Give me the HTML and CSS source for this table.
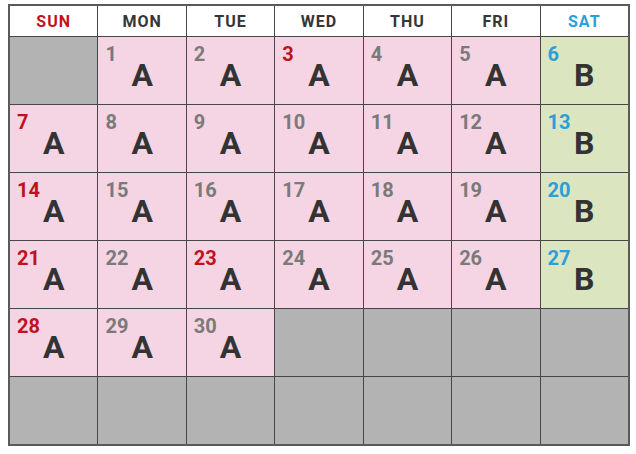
FILE: index.html
```html
<!DOCTYPE html>
<html>
<head>
<meta charset="utf-8">
<link rel="stylesheet" href="styles.css">
</head>
<body>
<div class="cal">
  <div class="hd sun">SUN</div>
  <div class="hd">MON</div>
  <div class="hd">TUE</div>
  <div class="hd">WED</div>
  <div class="hd">THU</div>
  <div class="hd">FRI</div>
  <div class="hd sat">SAT</div>

  <div class="c off"></div>
  <div class="c a"><span class="n">1</span><span class="l">A</span></div>
  <div class="c a"><span class="n">2</span><span class="l">A</span></div>
  <div class="c a"><span class="n red">3</span><span class="l">A</span></div>
  <div class="c a"><span class="n">4</span><span class="l">A</span></div>
  <div class="c a"><span class="n">5</span><span class="l">A</span></div>
  <div class="c b"><span class="n blue">6</span><span class="l">B</span></div>

  <div class="c a"><span class="n red">7</span><span class="l">A</span></div>
  <div class="c a"><span class="n">8</span><span class="l">A</span></div>
  <div class="c a"><span class="n">9</span><span class="l">A</span></div>
  <div class="c a"><span class="n">10</span><span class="l">A</span></div>
  <div class="c a"><span class="n">11</span><span class="l">A</span></div>
  <div class="c a"><span class="n">12</span><span class="l">A</span></div>
  <div class="c b"><span class="n blue">13</span><span class="l">B</span></div>

  <div class="c a"><span class="n red">14</span><span class="l">A</span></div>
  <div class="c a"><span class="n">15</span><span class="l">A</span></div>
  <div class="c a"><span class="n">16</span><span class="l">A</span></div>
  <div class="c a"><span class="n">17</span><span class="l">A</span></div>
  <div class="c a"><span class="n">18</span><span class="l">A</span></div>
  <div class="c a"><span class="n">19</span><span class="l">A</span></div>
  <div class="c b"><span class="n blue">20</span><span class="l">B</span></div>

  <div class="c a"><span class="n red">21</span><span class="l">A</span></div>
  <div class="c a"><span class="n">22</span><span class="l">A</span></div>
  <div class="c a"><span class="n red">23</span><span class="l">A</span></div>
  <div class="c a"><span class="n">24</span><span class="l">A</span></div>
  <div class="c a"><span class="n">25</span><span class="l">A</span></div>
  <div class="c a"><span class="n">26</span><span class="l">A</span></div>
  <div class="c b"><span class="n blue">27</span><span class="l">B</span></div>

  <div class="c a"><span class="n red">28</span><span class="l">A</span></div>
  <div class="c a"><span class="n">29</span><span class="l">A</span></div>
  <div class="c a"><span class="n">30</span><span class="l">A</span></div>
  <div class="c off"></div>
  <div class="c off"></div>
  <div class="c off"></div>
  <div class="c off"></div>

  <div class="c off"></div>
  <div class="c off"></div>
  <div class="c off"></div>
  <div class="c off"></div>
  <div class="c off"></div>
  <div class="c off"></div>
  <div class="c off"></div>
</div>
</body>
</html>
```
FILE: styles.css
```css
html, body {
  margin: 0;
  padding: 0;
  background: #ffffff;
}
body {
  padding: 4px 0 0 8px;
  font-family: Roboto, "Liberation Sans", sans-serif;
}
.cal {
  width: 622px;
  box-sizing: border-box;
  border: 2px solid #5a5a5a;
  background: #474747;
  display: grid;
  grid-template-columns: repeat(7, 1fr);
  grid-template-rows: 30px repeat(6, 67px);
  gap: 1px;
}
.hd {
  background: #ffffff;
  display: flex;
  align-items: center;
  justify-content: center;
  font-size: 16px;
  font-weight: 700;
  letter-spacing: 1px;
  color: #363636;
  padding-top: 1px;
}
.hd.sun { color: #c0111f; }
.hd.sat { color: #2a9fd9; }
.c {
  display: flex;
  flex-direction: column;
  padding: 7px 7px 0 7px;
}
.c.a { background: #f5d5e3; }
.c.b { background: #dbe6c1; }
.c.off { background: #b3b3b3; }
.n {
  font-size: 20px;
  line-height: 20px;
  font-weight: 700;
  color: #7a7a7a;
  align-self: flex-start;
}
.n.red { color: #c0111f; }
.n.blue { color: #2a9fd9; }
.l {
  font-size: 32px;
  line-height: 32px;
  font-weight: 700;
  color: #333333;
  text-align: center;
  margin-top: -5px;
}
```
